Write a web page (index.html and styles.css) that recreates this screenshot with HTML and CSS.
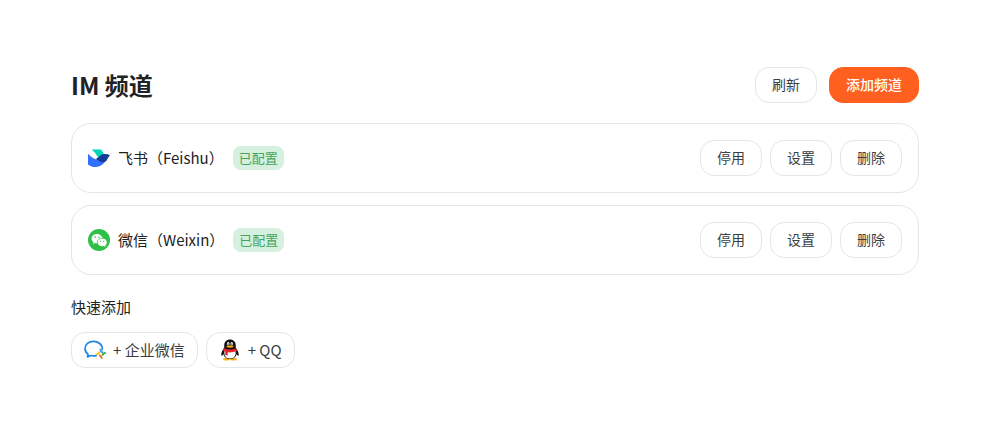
FILE: index.html
```html
<!DOCTYPE html>
<html lang="zh-CN">
<head>
  <meta charset="UTF-8">
  <title>IM 频道</title>
  <meta name="viewport" content="width=device-width, initial-scale=1.0">
  <link rel="stylesheet" href="styles.css">
</head>
<body>
  <main class="page">
    <header class="page-header">
      <h1>IM 频道</h1>
      <div class="header-actions">
        <button type="button" class="btn">刷新</button>
        <button type="button" class="btn btn-primary">添加频道</button>
      </div>
    </header>

    <ul class="channel-list">
      <li class="channel">
        <svg class="icon" viewBox="0 0 22 22" aria-hidden="true">
          <path d="M3.6 2.500h9.300c1.500 1.500 2.500 3.600 3 5.600-2 .5-3.600 1.800-5 3.600C9 8.300 6.800 5.100 3.600 2.500z" fill="#00d6b9"/>
          <path d="M0 6.800c3.600 3.800 8.100 6.500 12.500 6.900 2.200.2 4.300-.5 6-1.900-1.800 4.600-5.500 8.200-10.700 8.200-3 0-5.700-1-7.800-2.600z" fill="#3370ff"/>
          <path d="M7.600 12.100c3-1.200 4.500-4.500 8.300-5 2.100-.3 4.200.1 6.100 1.100-2 1.900-2.400 4.300-4 6-2.300 2.200-6.300 1-10.400-2.100z" fill="#133c9a"/>
        </svg>
        <span class="channel-name">飞书（Feishu）</span>
        <span class="badge">已配置</span>
        <div class="channel-actions">
          <button type="button" class="btn">停用</button>
          <button type="button" class="btn">设置</button>
          <button type="button" class="btn">删除</button>
        </div>
      </li>
      <li class="channel">
        <svg class="icon" viewBox="0 0 22 22" aria-hidden="true">
          <circle cx="11" cy="11" r="11" fill="#2dc146"/>
          <path d="M9 5C5.900 5 3.500 7 3.500 9.600c0 1.500.8 2.700 2 3.600L5 15l2.100-1.100c.6.200 1.300.3 2 .3 0-.2-.1-.5-.1-.8 0-2.400 2.300-4.300 5.200-4.300h.3C14 6.700 11.700 5 9 5z" fill="#fff"/>
          <path d="M14.200 9.600c-2.600 0-4.600 1.700-4.600 3.800s2 3.800 4.600 3.800c.6 0 1.100-.1 1.600-.2l1.700.9-.4-1.500c1-.7 1.700-1.800 1.700-3 0-2.100-2-3.800-4.600-3.800z" fill="#fff"/>
          <g fill="#2dc146">
            <circle cx="7.200" cy="8.300" r=".8"/>
            <circle cx="10.900" cy="8.300" r=".8"/>
            <circle cx="12.700" cy="12.400" r=".6"/>
            <circle cx="15.700" cy="12.400" r=".6"/>
          </g>
        </svg>
        <span class="channel-name">微信（Weixin）</span>
        <span class="badge">已配置</span>
        <div class="channel-actions">
          <button type="button" class="btn">停用</button>
          <button type="button" class="btn">设置</button>
          <button type="button" class="btn">删除</button>
        </div>
      </li>
    </ul>

    <section class="quick-add">
      <h2>快速添加</h2>
      <div class="quick-list">
        <button type="button" class="chip">
          <svg class="icon" viewBox="0 0 22 22" aria-hidden="true">
            <path d="M18.300 10.300C18.500 5.500 14.300 2.300 9.500 2.300 4.700 2.300 1 5.500 1 9.600c0 2.500 1.200 4.500 3.100 5.800L3.500 18l3.300-1.500c1.800.5 3.600.5 5.400.1" fill="none" stroke="#1e88e5" stroke-width="1.700" stroke-linecap="round" stroke-linejoin="round"/>
            <g fill="none" stroke-width="2" stroke-linecap="round">
              <path d="M16.500 10.800c.1 1.300.8 2 1.800 2.400" stroke="#3d9be8"/>
              <path d="M21 14c-1.300.1-2 .8-2.400 1.800" stroke="#2faa4a"/>
              <path d="M17.600 19c-.1-1.300-.8-2-1.800-2.400" stroke="#f06a35"/>
              <path d="M13 15.200c1.300-.1 2-.8 2.400-1.800" stroke="#fbc21c"/>
            </g>
          </svg>
          <span>+ 企业微信</span>
        </button>
        <button type="button" class="chip">
          <svg class="icon" viewBox="0 0 22 22" aria-hidden="true">
            <ellipse cx="7.500" cy="20.200" rx="3.400" ry="1.200" fill="#faab07"/>
            <ellipse cx="14.500" cy="20.200" rx="3.400" ry="1.200" fill="#faab07"/>
            <path d="M11 .5C7.500.5 5.200 3 5.200 6.500v2.200C3.500 11 2 14 2.300 16.200c.2 1.200 1.300.3 2.200-1.200.5 3.300 3.200 5 6.500 5s6-1.700 6.500-5c.9 1.500 2 2.400 2.200 1.200.3-2.200-1.200-5.200-2.900-7.500V6.500C16.800 3 14.500.5 11 .5z" fill="#111"/>
            <path d="M5.600 11.500c-1 4.600.8 8 5.400 8s6.400-3.400 5.400-8z" fill="#fff"/>
            <ellipse cx="9.300" cy="4.800" rx="1.200" ry="1.700" fill="#fff"/>
            <ellipse cx="12.700" cy="4.800" rx="1.200" ry="1.700" fill="#fff"/>
            <circle cx="9.600" cy="5" r=".6" fill="#111"/>
            <circle cx="12.400" cy="5" r=".6" fill="#111"/>
            <ellipse cx="11" cy="7.600" rx="3.600" ry="1.100" fill="#faab07"/>
            <path d="M4.800 9.200c3.700 1.800 8.700 1.800 12.400 0l.8 2.600c-3 1.400-6.100 1.800-9.200 1.500l-.2 3.200-2.500-.4.300-3.300c-.8-.3-1.600-.6-2.400-1z" fill="#e8232e"/>
          </svg>
          <span>+ QQ</span>
        </button>
      </div>
    </section>
  </main>
</body>
</html>
```
FILE: styles.css
```css
:root {
  --primary: #ff5f1f;
  --border: #e3e5e6;
  --text: #202224;
}

* {
  box-sizing: border-box;
}

body {
  margin: 0;
  background-color: #fff;
  color: var(--text);
  font-family: "Noto Sans CJK SC", sans-serif;
}

.page {
  padding: 67px 70px 60px 71px;
}

.page-header {
  display: flex;
  align-items: center;
  justify-content: space-between;
}

h1 {
  margin: 0;
  font-size: 24px;
  font-weight: 600;
  line-height: 36px;
}

.header-actions {
  display: flex;
  gap: 12px;
}

.btn,
.chip {
  height: 36px;
  border: 1px solid var(--border);
  border-radius: 14px;
  background-color: #fff;
  color: #3c3e40;
  font-family: inherit;
  cursor: pointer;
}

.btn {
  padding: 0 16px 2px;
  font-size: 14px;
  line-height: 20px;
}

.btn-primary {
  border-color: var(--primary);
  background-color: var(--primary);
  color: #fff;
  font-weight: 500;
}

.channel-list {
  display: flex;
  flex-direction: column;
  gap: 12px;
  margin: 20px 0;
  padding: 0;
  list-style: none;
}

.channel {
  display: flex;
  align-items: center;
  gap: 8px;
  padding: 16px;
  border: 1px solid var(--border);
  border-radius: 20px;
}

.icon {
  flex: none;
  width: 22px;
  height: 22px;
}

.channel-name {
  margin-right: 1px;
  font-size: 15px;
  line-height: 24px;
}

.badge {
  padding: 0 6px;
  border-radius: 8px;
  background-color: #d5f0df;
  color: #45a45c;
  font-size: 13px;
  line-height: 24px;
}

.channel-actions {
  display: flex;
  gap: 8px;
  margin-left: auto;
}

h2 {
  margin: 0 0 14px;
  font-size: 15px;
  font-weight: 400;
  line-height: 23px;
}

.quick-list {
  display: flex;
  gap: 8px;
}

.chip {
  display: flex;
  align-items: center;
  gap: 7px;
  padding: 0 12px;
  font-size: 15px;
  line-height: 24px;
}
```
